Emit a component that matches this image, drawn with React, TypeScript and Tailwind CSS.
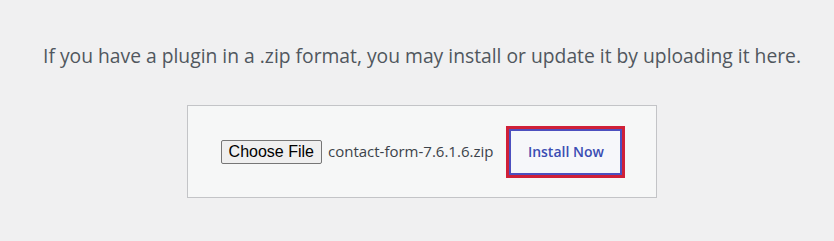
import React from "react";

export default function App() {
  return (
    <div className="w-[834px] h-[241px] bg-[#f0f0f1] flex flex-col items-center pt-[43px]" style={{ fontFamily: '"Open Sans", "Noto Sans", sans-serif' }}>
      <p className="ml-[10px] text-[19.3px] leading-[26px] text-[#50575e] whitespace-nowrap">
        If you have a plugin in a .zip format, you may install or update it by uploading it here.
      </p>
      <div className="mt-[36px] ml-[10px] w-[470px] h-[93px] bg-[#f6f7f7] border border-[#c3c4c7] flex items-center justify-center">
        <div className="flex items-center ml-[2px]">
          <button className="h-[24px] px-[7px] bg-[#efefef] border border-[#767676] rounded-[2px] text-[16px] text-black leading-none" style={{ fontFamily: '"Liberation Sans", Arial, sans-serif' }}>
            Choose File
          </button>
          <span className="ml-[6px] text-[15px] text-[#3c434a]">contact-form-7.6.1.6.zip</span>
          <div className="ml-[13px] border-[3px] border-[#cf2038] p-0">
            <div className="w-[113px] h-[46px] border-2 border-[#4c4fbf] bg-[#f6f7fa] flex items-center justify-center">
              <span className="text-[14px] font-semibold text-[#3b4db3]">Install Now</span>
            </div>
          </div>
        </div>
      </div>
    </div>
  );
}
